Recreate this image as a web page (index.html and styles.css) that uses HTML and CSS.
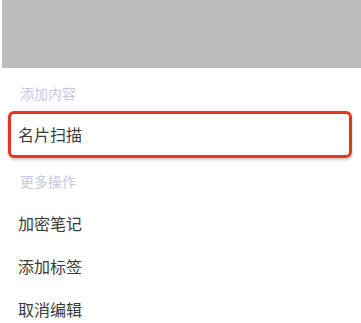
FILE: index.html
```html
<!DOCTYPE html>
<html lang="zh">
<head>
<meta charset="utf-8">
<link rel="stylesheet" href="styles.css">
</head>
<body>
<div class="backdrop"></div>
<div class="sheet">
  <div class="group-title first">添加内容</div>
  <div class="item highlighted">名片扫描</div>
  <div class="group-title second">更多操作</div>
  <div class="item">加密笔记</div>
  <div class="item">添加标签</div>
  <div class="item">取消编辑</div>
</div>
</body>
</html>
```

FILE: styles.css
```css
html, body {
  margin: 0;
  padding: 0;
  background: #ffffff;
  font-family: "Noto Sans CJK SC", "Noto Sans", sans-serif;
}
.backdrop {
  height: 68px;
  margin-left: 2px;
  background: #bdbcbe;
}
.sheet {
  display: flex;
  flex-direction: column;
}
.group-title {
  font-size: 14px;
  line-height: 22px;
  color: #c6c7df;
  padding-left: 20px;
}
.group-title.first {
  padding-top: 14px;
  padding-bottom: 7px;
}
.group-title.second {
  padding-top: 12px;
  padding-bottom: 10px;
}
.item {
  font-size: 16px;
  height: 43px;
  line-height: 43px;
  color: #3a3a3a;
  padding-left: 18px;
}
.item.highlighted {
  box-sizing: border-box;
  height: 47px;
  line-height: 40px;
  margin: 0 9px 0 8px;
  padding-left: 7px;
  border: 3.5px solid #e8351f;
  border-radius: 6px;
  box-shadow: 0 1.5px 3px rgba(0,0,0,0.2);
}
```
